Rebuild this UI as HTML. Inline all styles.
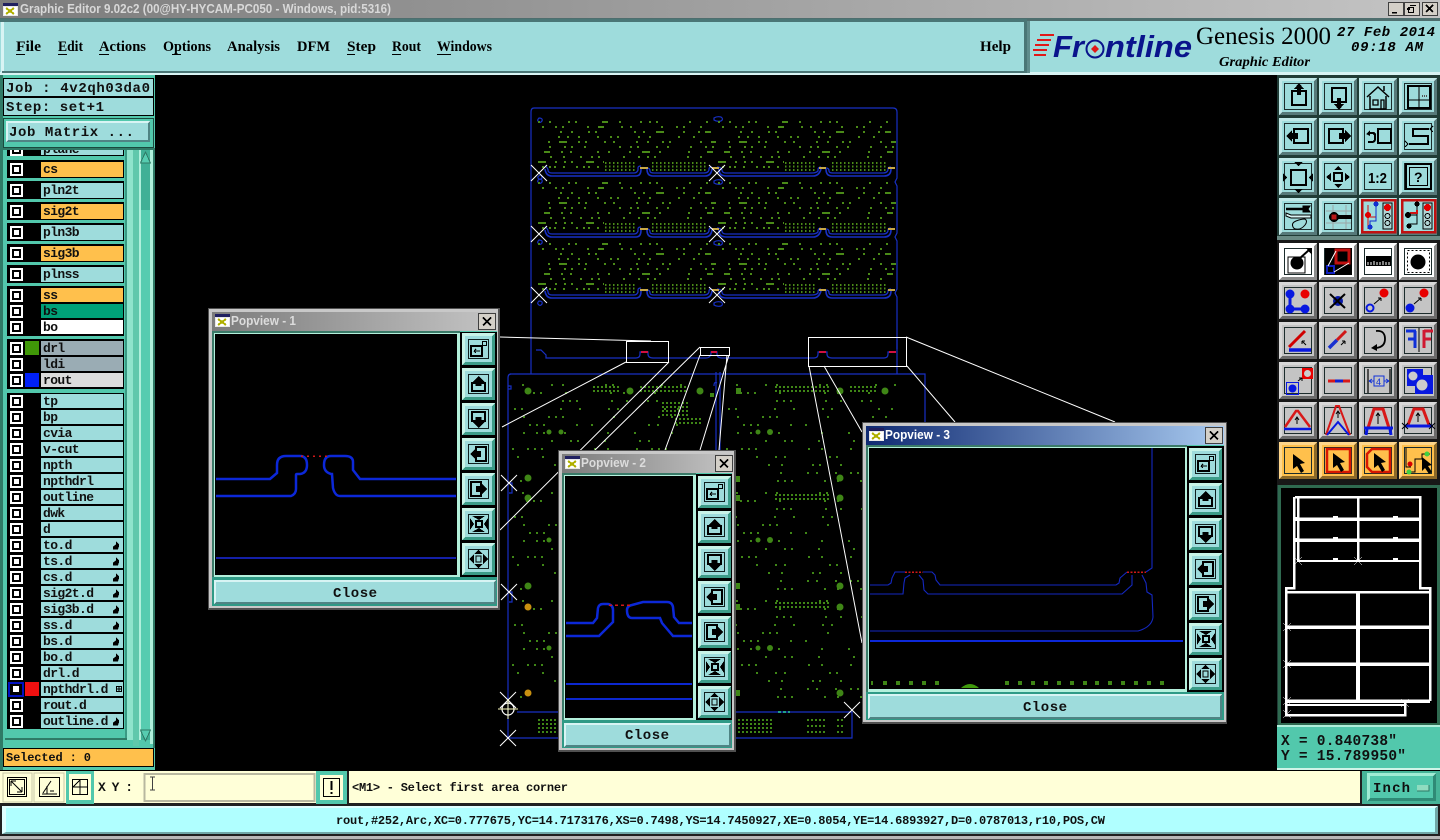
<!DOCTYPE html>
<html><head><meta charset="utf-8"><title>Graphic Editor</title>
<style>
html,body{margin:0;padding:0;background:#000;width:1440px;height:840px;overflow:hidden}
svg{display:block}
.m{font-family:"Liberation Mono",monospace;font-weight:bold;fill:#101010}
.s{font-family:"Liberation Serif",serif;font-weight:bold;fill:#000}
.l{font-size:13px;letter-spacing:-.6px}
.t{font-family:"Liberation Sans",sans-serif;font-weight:bold;font-size:13px}
</style></head><body>
<svg width="1440" height="840" viewBox="0 0 1440 840" xmlns="http://www.w3.org/2000/svg" shape-rendering="crispEdges">
<defs>
<linearGradient id="g1" x1="0" x2="1" y1="0" y2="0"><stop offset="0" stop-color="#7c7c7c"/><stop offset="1" stop-color="#c4c4c4"/></linearGradient>
<linearGradient id="g2" x1="0" x2="1" y1="0" y2="0"><stop offset="0" stop-color="#0f2a72"/><stop offset="1" stop-color="#a8caf0"/></linearGradient>
<g id="b"><rect width="38" height="37"/><path d="M0 0h38l-3 3H3v31l-3 3z" fill="#fff" fill-opacity=".35"/><path d="M38 37H0l3-3h32V3l3-3z" fill="#000" fill-opacity=".45"/><rect x="5.5" y="5.5" width="27" height="26" fill="none" stroke="#1c2c2c"/></g>
<g id="p"><rect width="33" height="32" fill="#9edcdc"/><path d="M0 0h33l-3 3H3v26l-3 3z" fill="#c8f4e8"/><path d="M33 32H0l3-3h27V3l3-3z" fill="#3c9c88"/><rect x="6.5" y="6.5" width="20" height="19" fill="none" stroke="#102020"/></g>
<g id="cb"><rect width="13" height="13" fill="#fff"/><rect x="2" y="2" width="9" height="9" fill="#000"/><rect x="4" y="4" width="5" height="5" fill="#fff"/></g>
<path id="hand" d="M-3 3.500l0-3 3-2 0-3 3 3 0 2-1 3z" fill="#000"/>
<g id="x" stroke="#fff" stroke-width="1" shape-rendering="auto"><path d="M-8-8L8 8M8-8L-8 8"/></g>
<g id="i1"><rect x="13" y="13" width="14" height="14" fill="none" stroke="#000" stroke-width="2"/><path d="M20 5l5 6h-3v6h-4v-6h-3z"/></g>
<g id="i2"><rect x="13" y="10" width="14" height="14" fill="none" stroke="#000" stroke-width="2"/><path d="M20 32l-5-6h3v-6h4v6h3z"/></g>
<g id="i3" fill="none" stroke="#000" shape-rendering="auto"><path d="M8 19L19 9l11 10M11 18v13h16V18M25 13V8" stroke-width="1.5"/><path d="M14 22h5v5h-5zM22 22h3v9h-3z" stroke-width="1.3"/></g>
<g id="i4" fill="none" stroke="#000"><rect x="9" y="8" width="22" height="22" stroke-width="2"/><path d="M20 8v22M9 22h22"/><path d="M23 18h6" stroke="#555" stroke-dasharray="1 1" stroke-width="2"/></g>
<g id="i5"><rect x="15" y="11" width="14" height="14" fill="none" stroke="#000" stroke-width="2"/><path d="M7 18l6-6v3h6v6h-6v3z"/></g>
<g id="i6"><rect x="10" y="11" width="14" height="14" fill="none" stroke="#000" stroke-width="2"/><path d="M32 18l-6-6v3h-6v6h6v3z"/></g>
<g id="i7"><rect x="19" y="11" width="13" height="14" fill="none" stroke="#000" stroke-width="2"/><path d="M7 16l4-4v2h3q3 0 3 3v4q0 4-4 4H9v-2h4q2 0 2-2v-3q0-2-2-2h-2v2z"/></g>
<g id="i8" fill="none" stroke="#000"><path d="M30 11H14v7h15v8H10" stroke-width="2"/><path d="M34 8l-3 3 3 3M6 23l3 3-3 3"/></g>
<g id="i9"><rect x="12" y="12" width="15" height="15" fill="none" stroke="#000" stroke-width="2"/><path d="M15 4h9l-4.500 4zM15 31h9l-4.500 4zM4 15v9l4-4.500zM34 15v9l-4-4.500z"/></g>
<g id="i10"><rect x="15" y="15" width="8" height="8" fill="none" stroke="#000" stroke-width="2"/><path d="M15 12h8l-4-4zM15 26h8l-4 4zM12 15v8l-5-4zM26 15v8l5-4z"/></g>
<g id="i12"><rect x="7" y="6" width="25" height="25" fill="none" stroke="#000" stroke-width="2"/><rect x="10.500" y="9.500" width="18" height="18" fill="none" stroke="#000"/><text x="15" y="24" font-family="Liberation Sans" font-weight="bold" font-size="14">?</text></g>
<g id="i13" fill="none" stroke="#000" shape-rendering="auto"><path d="M7 11h18" stroke-width="2.500"/><path d="M24 8h7l-2 3 2 3h-7z" fill="#000"/><path d="M7 15l5 2h20v3H12l-5-2z" fill="#d8f4f4" stroke-width="1"/><path d="M14 29q-2-4 3-6 5-2 9-2 3 2 0 6-4 5-9 4-2 0-3-2z" stroke-width="1"/></g>
<g id="i14"><path d="M7 13h25M7 25h25M14 7v24M27 7v24" stroke="#9ca6a6" fill="none"/><circle cx="15" cy="19" r="5" fill="#000"/><rect x="12.500" y="16.500" width="5" height="5" fill="#b81818"/><rect x="19" y="17" width="14" height="4"/></g>
<g id="i15"><rect x="3" y="2" width="33" height="32" fill="#9edcdc" stroke="#c01010" stroke-width="2.500"/><rect x="24" y="5" width="9" height="26" fill="#b0d4d4" stroke="#000"/><circle cx="28.500" cy="9.500" r="3.500" fill="#e00000"/><circle cx="28.500" cy="18" r="2.500" fill="none" stroke="#000"/><circle cx="28.500" cy="25" r="2.500" fill="none" stroke="#000"/><path d="M9 19h8M9 7v24" fill="none" stroke="#d01010"/><path d="M17 6v17H11v6" fill="none" stroke="#1030d0"/><circle cx="9" cy="17" r="3" fill="#e00000"/><circle cx="17" cy="6" r="2.500" fill="#1030d0"/><circle cx="11" cy="29" r="2.500" fill="#1030d0"/></g>
<g id="i16"><rect x="3" y="2" width="33" height="32" fill="#9edcdc" stroke="#c01010" stroke-width="2.500"/><rect x="24" y="5" width="9" height="26" fill="#b0d4d4" stroke="#000"/><circle cx="28.500" cy="9.500" r="3.500" fill="#e00000"/><circle cx="28.500" cy="18" r="2.500" fill="none" stroke="#000"/><circle cx="28.500" cy="25" r="2.500" fill="none" stroke="#000"/><path d="M18 6v20h-7M9 17h9" fill="none" stroke="#000"/><path d="M11 15h7v-3" fill="none" stroke="#d01010" stroke-width="2"/><circle cx="9" cy="17" r="3"/><circle cx="18" cy="6" r="2.500"/><circle cx="10" cy="28" r="2.500"/></g>
<g id="pa" fill="none" stroke="#000"><rect x="9" y="13" width="11" height="10" stroke-width="2"/><rect x="20.500" y="8.500" width="4" height="4"/><path d="M12 18h6M12 18l2-2M12 18l2 2"/></g>
<g id="pb"><rect x="10" y="15" width="13" height="8" fill="none" stroke="#000" stroke-width="2"/><path d="M16.500 8l6 6h-3v4h-6v-4h-3z"/></g>
<g id="pc"><rect x="10" y="9" width="13" height="9" fill="none" stroke="#000" stroke-width="2"/><path d="M16.500 25l-6-6h3v-5h6v5h3z"/></g>
<g id="pd"><rect x="14" y="9" width="10" height="14" fill="none" stroke="#000" stroke-width="2"/><path d="M8 16l6-6v3h5v6h-5v3z"/></g>
<g id="pe"><rect x="9" y="9" width="10" height="14" fill="none" stroke="#000" stroke-width="2"/><path d="M25 16l-6-6v3h-5v6h5v3z"/></g>
<g id="pf"><rect x="14" y="13" width="6" height="6" fill="none" stroke="#000" stroke-width="2"/><path d="M10 8h13l-6 4zM10 24h13l-6-4zM8 10v12l4-6zM26 10v12l-4-6z"/></g>
<g id="pg"><rect x="14" y="13" width="5" height="6" fill="none" stroke="#000"/><path d="M12 11h9l-4.500-4zM12 21h9l-4.500 4zM12 11v10l-5-5zM21 11v10l5-5z"/></g>
<g id="tb"><use href="#p"/><use href="#pa"/><use href="#p" y="35"/><use href="#pb" y="35"/><use href="#p" y="70"/><use href="#pc" y="70"/><use href="#p" y="105"/><use href="#pd" y="105"/><use href="#p" y="140"/><use href="#pe" y="140"/><use href="#p" y="175"/><use href="#pf" y="175"/><use href="#p" y="210"/><use href="#pg" y="210"/></g>
<g id="wi"><rect width="15" height="13" fill="#e8e8e8"/><rect width="15" height="3" fill="#202060"/><rect x="1" y="4" width="13" height="8" fill="#fff"/><path d="M3 5l8 6M11 5l-8 6" stroke="#b0b000" stroke-width="2"/></g>
<g id="wc"><rect width="17" height="16" fill="#d4d0c8" stroke="#404040"/><path d="M4.500 4l8 8M12.500 4l-8 8" stroke="#000" stroke-width="1.600"/></g>
<g id="cu" fill="none" stroke="#4a8a18" stroke-width="1.800">
<path d="M0 1h178" stroke-dasharray="2 9 2 17 2 5 2 25 6 11 2 19 2 7 2 5 2 31 2 15"/>
<path d="M0 6h178" stroke-dasharray="2 19 2 11 2 5 2 23 2 9 6 17 2 7 2 29 2 13 2 5 2 15" stroke-dashoffset="17"/>
<path d="M0 11h178" stroke-dasharray="2 13 2 5 6 25 2 9 2 15 2 5 2 37 2 7 2 11 8 19" stroke-dashoffset="31"/>
<path d="M0 16h178" stroke-dasharray="2 23 2 7 2 9 2 17 2 11 2 5 2 19 2 9 2 27 2 13" stroke-dashoffset="5"/>
<path d="M0 21h178" stroke-dasharray="2 13 2 5 2 29 2 9 8 11 2 5 2 17 2 7 2 21 2 9" stroke-dashoffset="43"/>
<path d="M0 26h178" stroke-dasharray="2 9 2 21 2 13 2 5 2 11 2 33 2 9 2 5 2 17" stroke-dashoffset="23"/>
<path d="M0 31h178" stroke-dasharray="2 17 6 11 2 7 2 25 2 9 2 19 2 11 8 9 2 27" stroke-dashoffset="13"/>
<path d="M0 36h178" stroke-dasharray="2 7 2 5 2 31 2 11 2 15 2 9 2 5 2 23 2 13" stroke-dashoffset="37"/>
<path d="M0 41h66" stroke-dasharray="8 9 2 7 2 5 2 13"/>
<path d="M0 46h66" stroke-dasharray="2 11 2 5 2 3 2 7" stroke-dashoffset="9"/>
<path d="M67 42h30M114 42h56M67 45.500h30M114 45.500h56M67 49h30M114 49h56" stroke-dasharray="1.600 2.400" stroke-width="1.600"/>
</g>
<g id="cl" fill="none" stroke="#3f8616" stroke-width="1.800">
<path d="M0 1h170" stroke-dasharray="2 15 2 27 2 9 2 41 2 5 2 47 2 17" stroke-dashoffset="7"/>
<path d="M0 9h170" stroke-dasharray="2 33 2 5 2 5 2 23 2 43 2 11 2 29" stroke-dashoffset="21"/>
<path d="M0 17h170" stroke-dasharray="2 19 2 7 2 53 2 5 2 5 2 33 2 13" stroke-dashoffset="35"/>
<path d="M0 25h170" stroke-dasharray="2 11 2 5 2 37 2 17 2 27 2 7 2 45" stroke-dashoffset="11"/>
<path d="M0 33h170" stroke-dasharray="2 43 2 11 2 23 2 5 2 5 2 49" stroke-dashoffset="47"/>
<path d="M0 41h170" stroke-dasharray="2 17 2 5 2 5 2 31 2 13 2 55 2 7" stroke-dashoffset="2"/>
<path d="M0 49h170" stroke-dasharray="2 25 2 35 2 11 2 5 2 19 2 41" stroke-dashoffset="53"/>
<path d="M0 57h170" stroke-dasharray="2 7 2 47 2 17 2 5 2 25 2 33" stroke-dashoffset="19"/>
<path d="M0 65h170" stroke-dasharray="2 27 2 13 2 5 2 5 2 51 2 11" stroke-dashoffset="29"/>
<path d="M0 73h170" stroke-dasharray="2 5 2 37 2 23 2 17 2 7 2 43" stroke-dashoffset="41"/>
<path d="M0 81h170" stroke-dasharray="2 49 2 11 2 29 2 5 2 19" stroke-dashoffset="9"/>
<path d="M0 89h170" stroke-dasharray="2 13 2 5 2 57 2 25 2 7 2 17" stroke-dashoffset="27"/>
<path d="M0 97h170" stroke-dasharray="2 21 2 41 2 5 2 5 2 31 2 11" stroke-dashoffset="15"/>
</g>
<g id="gr" stroke="#3f8616" stroke-width="1.800" stroke-dasharray="2 2" fill="none"><path d="M0 0h28M0 4h28"/></g>
<g id="row" fill="none" stroke="#1830c4" stroke-width="1.300" shape-rendering="auto">
<path d="M545 166q3 2 3 4 0 3 4 3H634q3 0 4-3v-2q0-2 3-2M647 168q3 0 3 3 0 2 4 2H704q4 0 5-3v-1q0-2 3-2M717 167q4 0 5 3 0 3 4 3H812q4 0 6-2v-1q0-3 3-3M826 168q3 0 3 3 0 2 4 2H883q4 0 5-3v-1q0-2 3-2"/>
<path d="M545 169q1 7 7 7H636q5 0 5-7M647 169q0 7 6 7H705q6 0 7-7M719 169q0 7 7 7H813q6 0 8-7M826 169q0 7 6 7H884q7 0 7-7" stroke-width="1.600"/>
<path d="M640 168h8M712 168h7M819 168h7M888 168h7" stroke="#c8a848" stroke-width="2"/>
</g>
</defs>

<rect width="1440" height="840" fill="#000"/>

<!-- Title bar -->
<rect width="1440" height="18" fill="url(#g1)"/>
<use href="#wi" x="3" y="3"/>
<text x="20" y="13" class="t" fill="#d8d8d8" textLength="371" lengthAdjust="spacingAndGlyphs">Graphic Editor 9.02c2 (00@HY-HYCAM-PC050 - Windows, pid:5316)</text>
<g fill="#d4d0c8" stroke="#404040"><rect x="1388.500" y="2.500" width="15" height="13"/><rect x="1404.500" y="2.500" width="15" height="13"/><rect x="1422.500" y="2.500" width="15" height="13"/></g>
<path d="M1392 12h5v1.500h-5zM1410 5h6v1h-6v4h-3v-2h3z" fill="#000"/>
<rect x="1408.500" y="7.500" width="5" height="5" fill="none" stroke="#000"/>
<path d="M1426 5l7 7M1433 5l-7 7" stroke="#000" stroke-width="1.500"/>
<rect y="18" width="1440" height="3" fill="#4e6e6e"/>

<!-- Menu -->
<rect y="21" width="1440" height="51" fill="#9edcdc"/>
<rect y="72" width="1440" height="3" fill="#d8f4f4"/>
<rect x="0" y="19" width="1027" height="3" fill="#4a7676"/>
<rect x="1" y="22" width="3" height="50" fill="#d8f4f4"/>
<rect x="2" y="71" width="1023" height="2" fill="#4a7676"/>
<rect x="1024" y="21" width="3" height="52" fill="#4a7676"/>
<rect x="1027" y="21" width="3" height="52" fill="#5f8c8c"/>
<text class="s" x="16" y="51" font-size="14.500" textLength="25" lengthAdjust="spacingAndGlyphs">File</text>
<text class="s" x="58" y="51" font-size="14.500" textLength="25" lengthAdjust="spacingAndGlyphs">Edit</text>
<text class="s" x="99" y="51" font-size="14.500" textLength="47" lengthAdjust="spacingAndGlyphs">Actions</text>
<text class="s" x="163" y="51" font-size="14.500" textLength="48" lengthAdjust="spacingAndGlyphs">Options</text>
<text class="s" x="227" y="51" font-size="14.500" textLength="53" lengthAdjust="spacingAndGlyphs">Analysis</text>
<text class="s" x="297" y="51" font-size="14.500" textLength="33" lengthAdjust="spacingAndGlyphs">DFM</text>
<text class="s" x="347" y="51" font-size="14.500" textLength="29" lengthAdjust="spacingAndGlyphs">Step</text>
<text class="s" x="392" y="51" font-size="14.500" textLength="29" lengthAdjust="spacingAndGlyphs">Rout</text>
<text class="s" x="437" y="51" font-size="14.500" textLength="55" lengthAdjust="spacingAndGlyphs">Windows</text>
<text class="s" x="980" y="51" font-size="14.500" textLength="31" lengthAdjust="spacingAndGlyphs">Help</text>
<path d="M16 54.500h9M58 54.500h9M99 54.500h10M172 54.500h9M347 54.500h8M392 54.500h9M437 54.500h14" stroke="#000" fill="none"/>

<!-- Header -->
<g stroke="#e01818" stroke-width="2" fill="none"><path d="M1040 35h14M1037 40h14M1035 45h14M1033 50h14M1034 55h12"/></g>
<text x="1053" y="57" font-family="Liberation Sans" font-weight="bold" font-style="italic" font-size="31" fill="#0a148c" textLength="31" lengthAdjust="spacingAndGlyphs">Fr</text>
<g shape-rendering="auto"><circle cx="1095" cy="49" r="8.500" fill="none" stroke="#0a148c" stroke-width="2"/><path d="M1095 45l4 4-4 4-4-4z" fill="#e01818"/></g>
<text x="1105" y="57" font-family="Liberation Sans" font-weight="bold" font-style="italic" font-size="31" fill="#0a148c" textLength="87" lengthAdjust="spacingAndGlyphs">ntline</text>
<text x="1196" y="44" font-family="Liberation Serif" font-size="25" fill="#000" textLength="135" lengthAdjust="spacingAndGlyphs">Genesis 2000</text>
<text x="1337" y="36" font-family="Liberation Mono" font-weight="bold" font-style="italic" font-size="14" fill="#000" textLength="98" xml:space="preserve">27 Feb 2014</text>
<text x="1351" y="51" font-family="Liberation Mono" font-weight="bold" font-style="italic" font-size="14" fill="#000" textLength="72">09:18 AM</text>
<text x="1219" y="66" font-family="Liberation Serif" font-weight="bold" font-style="italic" font-size="14" fill="#000" textLength="91" lengthAdjust="spacingAndGlyphs">Graphic Editor</text>

<!-- Left panel -->
<rect x="0" y="75" width="155" height="696" fill="#52c8ac"/>
<rect x="0" y="75" width="3" height="696" fill="#2f7a66"/>

<!-- scroll -->
<rect x="127" y="150" width="6" height="590" fill="#8fe4cc"/>
<rect x="133" y="150" width="6" height="596" fill="#60c8ac"/>
<rect x="139" y="150" width="2" height="590" fill="#b0f0dc"/>
<rect x="141" y="150" width="9" height="590" fill="#40b096"/>
<rect x="141" y="210" width="9" height="520" fill="#56ccb0"/>
<rect x="150" y="150" width="3" height="594" fill="#b0f0dc"/>
<rect x="153" y="150" width="2" height="598" fill="#2f7a66"/>
<path d="M145.500 152l5 11h-10z" fill="#56ccb0" stroke="#2f7a66"/>
<path d="M145.500 741l5-11h-10z" fill="#56ccb0" stroke="#2f7a66"/>
<rect x="125" y="150" width="2" height="590" fill="#3a9a84"/>

<!-- Layer list -->
<rect x="5" y="150" width="120" height="588" fill="#52c8ac"/>
<rect x="7" y="140" width="117" height="16" fill="#000"/>
<rect x="41" y="140" width="82" height="15" fill="#9edcdc"/><use href="#cb" x="10" y="143"/>
<text x="43" y="153" class="m l">plane</text>
<rect x="7" y="157" width="117" height="2" fill="#52c8ac"/>
<g>
<rect x="7" y="160" width="117" height="18" fill="#000"/><rect x="7" y="181" width="117" height="18" fill="#000"/><rect x="7" y="202" width="117" height="18" fill="#000"/><rect x="7" y="223" width="117" height="18" fill="#000"/><rect x="7" y="244" width="117" height="18" fill="#000"/><rect x="7" y="265" width="117" height="18" fill="#000"/>
<rect x="7" y="286" width="117" height="50" fill="#000"/><rect x="7" y="339" width="117" height="50" fill="#000"/><rect x="7" y="393" width="117" height="336" fill="#000"/>
</g>
<g>
<use href="#cb" x="10" y="163"/><rect x="41" y="162" width="82" height="15" fill="#ffc04c"/><text x="43" y="173" class="m l">cs</text>
<use href="#cb" x="10" y="184"/><rect x="41" y="183" width="82" height="15" fill="#9edcdc"/><text x="43" y="194" class="m l">pln2t</text>
<use href="#cb" x="10" y="205"/><rect x="41" y="204" width="82" height="15" fill="#ffc04c"/><text x="43" y="215" class="m l">sig2t</text>
<use href="#cb" x="10" y="226"/><rect x="41" y="225" width="82" height="15" fill="#9edcdc"/><text x="43" y="236" class="m l">pln3b</text>
<use href="#cb" x="10" y="247"/><rect x="41" y="246" width="82" height="15" fill="#ffc04c"/><text x="43" y="257" class="m l">sig3b</text>
<use href="#cb" x="10" y="268"/><rect x="41" y="267" width="82" height="15" fill="#9edcdc"/><text x="43" y="278" class="m l">plnss</text>
<use href="#cb" x="10" y="289"/><rect x="41" y="288" width="82" height="14" fill="#ffc04c"/><text x="43" y="299" class="m l">ss</text>
<use href="#cb" x="10" y="305"/><rect x="41" y="304" width="82" height="14" fill="#00a078"/><text x="43" y="315" class="m l">bs</text>
<use href="#cb" x="10" y="321"/><rect x="41" y="320" width="82" height="14" fill="#fff"/><text x="43" y="331" class="m l">bo</text>
<use href="#cb" x="10" y="342"/><rect x="25" y="341" width="14" height="14" fill="#409808"/><rect x="41" y="341" width="82" height="14" fill="#9aacb4"/><text x="43" y="352" class="m l">drl</text>
<use href="#cb" x="10" y="358"/><rect x="41" y="357" width="82" height="14" fill="#9aacb4"/><text x="43" y="368" class="m l">ldi</text>
<use href="#cb" x="10" y="374"/><rect x="25" y="373" width="14" height="14" fill="#0020f8"/><rect x="41" y="373" width="82" height="14" fill="#dcdcdc"/><text x="43" y="384" class="m l">rout</text>
<use href="#cb" x="10" y="395"/><rect x="41" y="394" width="82" height="14" fill="#9edcdc"/><text x="43" y="405" class="m l">tp</text>
<use href="#cb" x="10" y="411"/><rect x="41" y="410" width="82" height="14" fill="#9edcdc"/><text x="43" y="421" class="m l">bp</text>
<use href="#cb" x="10" y="427"/><rect x="41" y="426" width="82" height="14" fill="#9edcdc"/><text x="43" y="437" class="m l">cvia</text>
<use href="#cb" x="10" y="443"/><rect x="41" y="442" width="82" height="14" fill="#9edcdc"/><text x="43" y="453" class="m l">v-cut</text>
<use href="#cb" x="10" y="459"/><rect x="41" y="458" width="82" height="14" fill="#9edcdc"/><text x="43" y="469" class="m l">npth</text>
<use href="#cb" x="10" y="475"/><rect x="41" y="474" width="82" height="14" fill="#9edcdc"/><text x="43" y="485" class="m l">npthdrl</text>
<use href="#cb" x="10" y="491"/><rect x="41" y="490" width="82" height="14" fill="#9edcdc"/><text x="43" y="501" class="m l">outline</text>
<use href="#cb" x="10" y="507"/><rect x="41" y="506" width="82" height="14" fill="#9edcdc"/><text x="43" y="517" class="m l">dwk</text>
<use href="#cb" x="10" y="523"/><rect x="41" y="522" width="82" height="14" fill="#9edcdc"/><text x="43" y="533" class="m l">d</text>
<use href="#cb" x="10" y="539"/><rect x="41" y="538" width="82" height="14" fill="#9edcdc"/><text x="43" y="549" class="m l">to.d</text><use href="#hand" x="116" y="546"/>
<use href="#cb" x="10" y="555"/><rect x="41" y="554" width="82" height="14" fill="#9edcdc"/><text x="43" y="565" class="m l">ts.d</text><use href="#hand" x="116" y="562"/>
<use href="#cb" x="10" y="571"/><rect x="41" y="570" width="82" height="14" fill="#9edcdc"/><text x="43" y="581" class="m l">cs.d</text><use href="#hand" x="116" y="578"/>
<use href="#cb" x="10" y="587"/><rect x="41" y="586" width="82" height="14" fill="#9edcdc"/><text x="43" y="597" class="m l">sig2t.d</text><use href="#hand" x="116" y="594"/>
<use href="#cb" x="10" y="603"/><rect x="41" y="602" width="82" height="14" fill="#9edcdc"/><text x="43" y="613" class="m l">sig3b.d</text><use href="#hand" x="116" y="610"/>
<use href="#cb" x="10" y="619"/><rect x="41" y="618" width="82" height="14" fill="#9edcdc"/><text x="43" y="629" class="m l">ss.d</text><use href="#hand" x="116" y="626"/>
<use href="#cb" x="10" y="635"/><rect x="41" y="634" width="82" height="14" fill="#9edcdc"/><text x="43" y="645" class="m l">bs.d</text><use href="#hand" x="116" y="642"/>
<use href="#cb" x="10" y="651"/><rect x="41" y="650" width="82" height="14" fill="#9edcdc"/><text x="43" y="661" class="m l">bo.d</text><use href="#hand" x="116" y="658"/>
<use href="#cb" x="10" y="667"/><rect x="41" y="666" width="82" height="14" fill="#9edcdc"/><text x="43" y="677" class="m l">drl.d</text>
<rect x="8" y="682" width="16" height="15" fill="#0010c0"/><rect x="10" y="684" width="12" height="11" fill="#000"/><rect x="13" y="686" width="6" height="6" fill="#fff"/><rect x="25" y="682" width="14" height="14" fill="#f01010"/><rect x="41" y="682" width="82" height="14" fill="#9edcdc"/><text x="43" y="693" class="m l">npthdrl.d</text><path d="M116.500 686.500h5v5h-5zM119 686v6M116 689h6" fill="none" stroke="#000"/>
<use href="#cb" x="10" y="699"/><rect x="41" y="698" width="82" height="14" fill="#9edcdc"/><text x="43" y="709" class="m l">rout.d</text>
<use href="#cb" x="10" y="715"/><rect x="41" y="714" width="82" height="14" fill="#9edcdc"/><text x="43" y="725" class="m l">outline.d</text><use href="#hand" x="116" y="722"/>
</g>
<rect x="5" y="738" width="122" height="2" fill="#2f7a66"/>
<rect x="3" y="748" width="151" height="19" fill="#000"/><rect x="4" y="749" width="149" height="17" fill="#ffc04c"/>
<text x="6" y="761" class="m" font-size="12" textLength="85" xml:space="preserve">Selected : 0</text>

<!-- Job panel (covers top of list) -->
<rect x="0" y="75" width="155" height="75" fill="#52c8ac"/>
<rect x="0" y="75" width="3" height="75" fill="#2f7a66"/>
<rect x="3" y="78" width="151" height="19" fill="#000"/><rect x="4" y="79" width="149" height="17" fill="#9edcdc"/>
<rect x="3" y="97" width="151" height="19" fill="#000"/><rect x="4" y="98" width="149" height="17" fill="#9edcdc"/>
<text x="6" y="92" class="m" font-size="14" textLength="144" xml:space="preserve">Job : 4v2qh03da0</text>
<text x="6" y="111" class="m" font-size="14" textLength="98">Step: set+1</text>
<rect x="3.500" y="118.500" width="150" height="29" fill="none" stroke="#1a4a3e"/>
<rect x="6" y="121" width="144" height="21" fill="#9edcdc"/>
<path d="M6 121h144l-2 2H8v17l-2 2z" fill="#d8f4f4"/><path d="M150 142H6l2-2h140v-17l2-2z" fill="#4f8484"/>
<text x="9" y="136" class="m" font-size="14" textLength="125" xml:space="preserve">Job Matrix ...</text>
<rect x="0" y="148" width="155" height="2" fill="#2f7a66"/>

<!-- PCB top -->
<g fill="none" stroke="#1830c4" stroke-width="1.200" shape-rendering="auto">
<path d="M534 108H893q4 0 4 4v66l-2 4 2 4v47l-2 4 2 4v48l-2 4 2 4v52M531 340V112q0-4 3-4"/>
<path d="M531 340v34M897 340v34M510 374H925v48"/>
<path d="M539 118q-2 2-1 3 2 3 4 0 1-3-3-3zM714 118q3-2 7-1 3 2 0 4-4 1-7-1z"/>
<path d="M540 175q-3 2-2 3 2 3 4 0 0-3-2-3z"/>
<path d="M714 181q3-2 7-1 3 2 0 4-4 1-7-1zM714 242q3-2 7-1 3 2 0 4-4 1-7-1zM714 303q3-2 7-1 3 2 0 4-4 1-7-1z"/>
<path d="M539 179q-2 2-1 3 2 3 4 0 1-3-3-3zM539 240q-2 2-1 3 2 3 4 0 1-3-3-3zM539 301q-2 2-1 3 2 3 4 0 1-3-3-3z"/>
<path d="M536 350h5l5 5v3H636q4 0 4-4v-2h8v2q0 4 5 4H706q4 0 5-4v-2h6v2q0 4 5 4H814q4 0 4-4v-2h9v2q0 4 5 4H884q4 0 4-4v-2h7"/>
</g>
<use href="#cu" x="538" y="121"/><use href="#cu" x="718" y="121"/>
<use href="#cu" x="538" y="182"/><use href="#cu" x="718" y="182"/>
<use href="#cu" x="538" y="243"/><use href="#cu" x="718" y="243"/>
<use href="#row"/><use href="#row" y="61"/><use href="#row" y="122"/>
<path d="M641 352h7M711 352h6M819 352h7M889 352h7" stroke="#d01040" stroke-width="2"/>

<!-- PCB lower -->
<g fill="none" stroke="#1830c4" stroke-width="1.200" shape-rendering="auto">
<path d="M508 378q0-4 3-4M508 378v360h344V712H517M508 386l3 0v3l-3 0M716 372v78M720 372v78M717 383q-3-2-3 3M509 483h3v10h-3M509 592h3v10h-3"/>
</g>
<use href="#cl" x="512" y="384"/><use href="#cl" x="512" y="492"/><use href="#cl" x="512" y="600"/>
<use href="#cl" x="726" y="384"/><use href="#cl" x="726" y="492"/><use href="#cl" x="726" y="600"/>
<use href="#gr" x="593" y="387"/><use href="#gr" x="640" y="387"/><use href="#gr" x="660" y="387"/><use href="#gr" x="775" y="387"/><use href="#gr" x="803" y="387"/><use href="#gr" x="850" y="387"/>
<use href="#gr" x="803" y="495"/><use href="#gr" x="775" y="495"/><use href="#gr" x="803" y="603"/><use href="#gr" x="775" y="603"/>
<use href="#gr" x="662" y="403"/><use href="#gr" x="662" y="411"/><use href="#gr" x="675" y="419"/>
<g fill="#3f8616" shape-rendering="auto">
<circle cx="528" cy="391" r="3.500"/><circle cx="630" cy="391" r="3.500"/><circle cx="700" cy="391" r="3.500"/><circle cx="840" cy="391" r="3.500"/><circle cx="885" cy="391" r="3.500"/>
<circle cx="528" cy="478" r="3.500"/><circle cx="528" cy="498" r="3.500"/><circle cx="528" cy="586" r="3.500"/>
<circle cx="840" cy="478" r="3.500"/><circle cx="840" cy="498" r="3.500"/><circle cx="840" cy="586" r="3.500"/><circle cx="840" cy="607" r="3.500"/><circle cx="840" cy="693" r="3.500"/>
<rect x="736" y="388" width="5" height="6"/><rect x="736" y="476" width="4" height="6"/><rect x="736" y="495" width="4" height="6"/><rect x="736" y="583" width="4" height="6"/><rect x="736" y="604" width="4" height="6"/><rect x="736" y="690" width="4" height="6"/>
<circle cx="549" cy="432" r="2.500"/><circle cx="561" cy="432" r="2.500"/><circle cx="549" cy="540" r="2.500"/><circle cx="549" cy="648" r="2.500"/>
<circle cx="758" cy="432" r="2.500"/><circle cx="770" cy="432" r="3"/><circle cx="758" cy="540" r="2.500"/><circle cx="770" cy="540" r="3"/><circle cx="758" cy="648" r="2.500"/><circle cx="770" cy="648" r="3"/>
<rect x="710" y="393" width="4" height="4"/>
</g>
<circle cx="528" cy="607" r="3.500" fill="#c89010" shape-rendering="auto"/><circle cx="528" cy="693" r="3.500" fill="#c89010" shape-rendering="auto"/>
<path d="M538 720h20M538 724h20M538 728h20M538 732h20M738 720h34M738 724h34M738 728h34M738 732h34M807 720h20M807 726h20M807 732h20M837 720h8M837 726h8M837 732h8" stroke="#3f8616" stroke-width="2" stroke-dasharray="2 2"/>
<path d="M778 712h12" stroke="#20a088" stroke-width="2" stroke-dasharray="3 2"/>

<!-- White callouts -->
<g fill="none" stroke="#fff" stroke-width="1" shape-rendering="auto">
<path d="M500 337l151 4M626.500 341.500h42v21h-42zM626 362L502 427M669 362L500 530"/>
<path d="M700.500 347.500h29v8h-29zM700 347L595 450M700 355L665 450M729 355L700 450M727 355L719 450"/>
<path d="M808.500 337.500h98v29h-98zM906 337L1115 422M907 366L955 422M824 366L862 432M809 366L862 643"/>
</g>
<g shape-rendering="auto"><use href="#x" x="539" y="173"/><use href="#x" x="717" y="173"/><use href="#x" x="539" y="234"/><use href="#x" x="717" y="234"/><use href="#x" x="539" y="295"/><use href="#x" x="717" y="295"/>
<use href="#x" x="509" y="483"/><use href="#x" x="509" y="592"/><use href="#x" x="508" y="700"/><use href="#x" x="508" y="738"/><use href="#x" x="852" y="710"/>
<circle cx="508" cy="709" r="6" fill="none" stroke="#fff" stroke-width="1.200"/><path d="M498 709h20M508 699v20" stroke="#ffffc0"/></g>

<!-- Popview 1 -->
<rect x="208" y="308" width="292" height="302" fill="#505050"/><rect x="209" y="309" width="289" height="299" fill="#c8c8c8"/>
<rect x="212" y="312" width="284" height="19" fill="url(#g1)"/><use href="#wi" x="215" y="314"/>
<text x="231" y="325" class="t" fill="#dcdcdc" textLength="65" lengthAdjust="spacingAndGlyphs">Popview - 1</text><use href="#wc" x="478.500" y="313.500"/>
<rect x="212" y="331" width="285" height="275" fill="#52c8ac"/>
<rect x="212" y="331" width="248" height="246" fill="#3a7a68"/><rect x="214" y="333" width="246" height="244" fill="#b4f0dc"/><rect x="215" y="334" width="242" height="241" fill="#000"/>
<rect x="460" y="332" width="37" height="245" fill="#000"/><use href="#tb" x="462" y="333"/>
<rect x="212" y="577" width="285" height="29" fill="#2f9a86"/><rect x="214" y="580" width="282" height="24" fill="#9edcdc"/><path d="M214 580h282l-2 2H216v20l-2 2z" fill="#d8f4f4"/><path d="M496 604H214l2-2h278v-20l2-2z" fill="#4f8484"/>
<text x="333" y="597" class="m" font-size="14" textLength="44">Close</text>
<g fill="none" stroke="#0c28d8" stroke-width="2.500" shape-rendering="auto">
<path d="M216 479h54l7-6v-8q0-9 9-9h14q7 0 7 9 0 8-7 9h-3q-1 0-1 1v14q0 5-5 7H216"/>
<path d="M456 479H360l-7-9v-8q0-6-8-6H331q-7 0-7 9 0 7 7 9h1l1 14q2 8 7 8H456"/>
</g>
<path d="M216 558h240" stroke="#1420a8" stroke-width="2"/>
<path d="M301 456h29" stroke="#d01818" stroke-width="1.500" stroke-dasharray="2 4"/>

<!-- Popview 2 -->
<rect x="558" y="450" width="178" height="302" fill="#505050"/><rect x="559" y="451" width="175" height="299" fill="#c8c8c8"/>
<rect x="562" y="454" width="170" height="19" fill="url(#g1)"/><use href="#wi" x="565" y="456"/>
<text x="581" y="467" class="t" fill="#dcdcdc" textLength="65" lengthAdjust="spacingAndGlyphs">Popview - 2</text><use href="#wc" x="715.500" y="455.500"/>
<rect x="562" y="473" width="170" height="275" fill="#52c8ac"/>
<rect x="562" y="473" width="134" height="247" fill="#3a7a68"/><rect x="564" y="475" width="132" height="245" fill="#b4f0dc"/><rect x="565" y="476" width="128" height="242" fill="#000"/>
<rect x="696" y="474" width="36" height="246" fill="#000"/><use href="#tb" x="698" y="476"/>
<rect x="562" y="720" width="170" height="28" fill="#2f9a86"/><rect x="564" y="723" width="167" height="24" fill="#9edcdc"/><path d="M564 723h167l-2 2H566v20l-2 2z" fill="#d8f4f4"/><path d="M731 747H564l2-2h163v-20l2-2z" fill="#4f8484"/>
<text x="625" y="739" class="m" font-size="14" textLength="44">Close</text>
<g fill="none" stroke="#0c28d8" stroke-width="2.500" shape-rendering="auto">
<path d="M566 623h27l4-5 1-10q1-4 5-4h5q5 1 5 6v12l-14 14H566"/>
<path d="M692 623H679l-5-6-1-10q-1-5-6-5H643l-11 3q-5 1-5 5 0 8 5 8l28 0q2 5 2 5l11 13H692"/>
</g>
<path d="M566 684h126M566 699h126" stroke="#0c28d0" stroke-width="2"/>
<path d="M609 605h23" stroke="#d01818" stroke-width="1.500" stroke-dasharray="3 3"/>

<!-- Popview 3 -->
<rect x="862" y="422" width="365" height="302" fill="#505050"/><rect x="863" y="423" width="363" height="299" fill="#c8c8c8"/>
<rect x="866" y="426" width="358" height="19" fill="url(#g2)"/><use href="#wi" x="869" y="428"/>
<text x="885" y="439" class="t" fill="#fff" textLength="65" lengthAdjust="spacingAndGlyphs">Popview - 3</text><use href="#wc" x="1205.500" y="427.500"/>
<rect x="866" y="445" width="358" height="275" fill="#52c8ac"/>
<rect x="866" y="445" width="321" height="247" fill="#3a7a68"/><rect x="868" y="447" width="319" height="245" fill="#b4f0dc"/><rect x="869" y="448" width="316" height="241" fill="#000"/>
<rect x="1187" y="446" width="37" height="246" fill="#000"/><use href="#tb" x="1189" y="448"/>
<rect x="866" y="692" width="358" height="28" fill="#2f9a86"/><rect x="868" y="694" width="354" height="25" fill="#9edcdc"/><path d="M868 694h354l-2 2H870v21l-2 2z" fill="#d8f4f4"/><path d="M1222 719H868l2-2h350v-21l2-2z" fill="#4f8484"/>
<text x="1023" y="711" class="m" font-size="14" textLength="44">Close</text>
<g fill="none" stroke="#1428c0" stroke-width="1.100" shape-rendering="auto">
<path d="M1152 448V568l-6 4M1127 572l-7 6-1 5-3 2H940l-4-5-1-5-3-3H923M905 572H895l-3 6-1 5-3 2H870"/>
<path d="M870 594h33l1-11 1-5 5-3M919 575l4 5 1 10 4 4h194l10-9v-10M1142 575l4 8 1 9 5 3 1 22q-1 10-15 14H870"/>
</g>
<path d="M870 641h313" stroke="#0c28d8" stroke-width="2"/>
<path d="M905 572h18M1127 572h19" stroke="#d01818" stroke-width="1.500" stroke-dasharray="2 1.500"/>
<path d="M871 683h2M883 683h4M896 683h4M909 683h4M922 683h4M935 683h4M1005 683h4M1018 683h4M1031 683h4M1044 683h4M1057 683h4M1070 683h4M1083 683h4M1095 683h4M1108 683h4M1121 683h4M1134 683h4M1147 683h4M1160 683h4" stroke="#3f8616" stroke-width="4"/>
<path d="M961 688q9-8 18 0z" fill="#3f9a0c" shape-rendering="auto"/>

<!-- Right toolbar -->
<rect x="1277" y="75" width="163" height="696" fill="#203c36"/>
<rect x="1277" y="236" width="163" height="4" fill="#6a8a84"/>
<rect x="1277" y="240" width="163" height="245" fill="#181818"/>
<g fill="#9edcdc">
<use href="#b" x="1279" y="78"/><use href="#b" x="1319" y="78"/><use href="#b" x="1359" y="78"/><use href="#b" x="1399" y="78"/>
<use href="#b" x="1279" y="118"/><use href="#b" x="1319" y="118"/><use href="#b" x="1359" y="118"/><use href="#b" x="1399" y="118"/>
<use href="#b" x="1279" y="158"/><use href="#b" x="1319" y="158"/><use href="#b" x="1359" y="158"/><use href="#b" x="1399" y="158"/>
<use href="#b" x="1279" y="198"/><use href="#b" x="1319" y="198"/><use href="#b" x="1359" y="198"/><use href="#b" x="1399" y="198"/>
</g>
<use href="#i1" x="1279" y="78"/><use href="#i2" x="1319" y="78"/><use href="#i3" x="1359" y="78"/><use href="#i4" x="1399" y="78"/>
<use href="#i5" x="1279" y="118"/><use href="#i6" x="1319" y="118"/><use href="#i7" x="1359" y="118"/><use href="#i8" x="1399" y="118"/>
<use href="#i9" x="1279" y="158"/><use href="#i10" x="1319" y="158"/><text x="1368" y="183" font-family="Liberation Sans" font-weight="bold" font-size="15" fill="#000" textLength="19" lengthAdjust="spacingAndGlyphs">1:2</text><use href="#i12" x="1399" y="158"/>
<use href="#i13" x="1279" y="198"/><use href="#i14" x="1319" y="198"/><use href="#i15" x="1359" y="198"/><use href="#i16" x="1399" y="198"/>

<use href="#b" x="1279" y="243" fill="#fff"/><use href="#b" x="1319" y="243" fill="#fff"/><use href="#b" x="1359" y="243" fill="#fff"/><use href="#b" x="1399" y="243" fill="#fff"/>
<g transform="translate(1279 243)"><rect x="9" y="14" width="17" height="16" fill="none" stroke="#000"/><circle cx="18" cy="20" r="6.500" shape-rendering="auto"/><path d="M20 16L30 7" stroke="#000" stroke-width="2" shape-rendering="auto"/><path d="M27 5h6v7z"/></g>
<g transform="translate(1319 243)"><rect x="6" y="5" width="27" height="27"/><rect x="17" y="7" width="13" height="13" fill="none" stroke="#c01010" stroke-width="3"/><rect x="8" y="23" width="7" height="7" fill="none" stroke="#1020c0" stroke-width="2"/><path d="M9 23L17 8M15 29L30 20" stroke="#fff" shape-rendering="auto"/></g>
<g transform="translate(1359 243)"><rect x="7" y="13" width="25" height="10"/><path d="M9 22v-3M12 22v-3M15 22v-4M18 22v-3M21 22v-3M24 22v-4M27 22v-3M30 22v-3" stroke="#fff"/></g>
<g transform="translate(1399 243)"><rect x="8.500" y="7.500" width="22" height="22" fill="none" stroke="#000" stroke-dasharray="2 2"/><circle cx="19" cy="19" r="7.500" shape-rendering="auto"/></g>

<g fill="#c4c4c4">
<use href="#b" x="1279" y="282"/><use href="#b" x="1319" y="282"/><use href="#b" x="1359" y="282"/><use href="#b" x="1399" y="282"/>
<use href="#b" x="1279" y="322"/><use href="#b" x="1319" y="322"/><use href="#b" x="1359" y="322"/><use href="#b" x="1399" y="322"/>
<use href="#b" x="1279" y="362"/><use href="#b" x="1319" y="362"/><use href="#b" x="1359" y="362"/><use href="#b" x="1399" y="362"/>
<use href="#b" x="1279" y="402"/><use href="#b" x="1319" y="402"/><use href="#b" x="1359" y="402"/><use href="#b" x="1399" y="402"/>
</g>
<g shape-rendering="auto">
<g transform="translate(1279 282)"><path d="M11 13v14h14" fill="none" stroke="#0818e0" stroke-width="3"/><circle cx="11" cy="12" r="4.500" fill="#0818e0"/><circle cx="11" cy="27" r="4.500" fill="#0818e0"/><circle cx="26" cy="27" r="4.500" fill="#0818e0"/><circle cx="26" cy="12" r="4.500" fill="#e80000"/></g>
<g transform="translate(1319 282)"><circle cx="19" cy="19" r="5" fill="#0818a8"/><path d="M11 12l15 14M26 12L11 26" stroke="#000" stroke-width="2"/></g>
<g transform="translate(1359 282)"><circle cx="25" cy="11" r="4.500" fill="#e80000"/><circle cx="11" cy="26" r="3.500" fill="none" stroke="#0818e0" stroke-width="2"/><path d="M15 22l7-6M22 16l-3 0M22 16v3" stroke="#000"/></g>
<g transform="translate(1399 282)"><circle cx="25" cy="11" r="4.500" fill="#e80000"/><circle cx="11" cy="26" r="4.500" fill="#0818e0"/><path d="M15 22l7-6M22 16l-3 0M22 16v3" stroke="#000"/></g>

<g transform="translate(1279 322)"><path d="M10 25L26 9" stroke="#d00000" stroke-width="3"/><path d="M10 28h22" stroke="#0818e0" stroke-width="3.500"/><path d="M23 19l4 4M23 19v3M23 19h3" stroke="#000"/></g>
<g transform="translate(1319 322)"><path d="M10 26l8-8" stroke="#1830d0" stroke-width="3.500"/><path d="M18 18l9-9" stroke="#d01818" stroke-width="3"/><path d="M22 23l4-4M26 19h-3M26 19v3" stroke="#000"/></g>
<g transform="translate(1359 322)"><path d="M17 9q9-1 9 8 0 8-9 9" fill="none" stroke="#000" stroke-width="1.800"/><path d="M12 26l6-4v7z"/></g>
<g transform="translate(1399 322)"><path d="M7 9h10M9 17h8M16 9v17" fill="none" stroke="#1030d8" stroke-width="3"/><path d="M20 6v24" stroke="#000"/><path d="M34 9H25M32 17h-7M25 8v18" fill="none" stroke="#d01830" stroke-width="3"/></g>

<g transform="translate(1279 362)"><rect x="23" y="6" width="11" height="11" fill="#e80000"/><circle cx="28.500" cy="11.500" r="3.500" fill="#ccc"/><rect x="7.500" y="20.500" width="12" height="12" fill="none" stroke="#0818e0"/><circle cx="13.500" cy="26.500" r="4" fill="#0818e0"/><path d="M19 19l4-3M23 16h-3M23 16v3" stroke="#000"/></g>
<g transform="translate(1319 362)"><path d="M9 19h22" stroke="#d81818" stroke-width="3"/><path d="M16 19h8" stroke="#1020d0" stroke-width="3"/></g>
<g transform="translate(1359 362)"><path d="M9 7v24M31 7v24" stroke="#000" stroke-width="1.200"/><path d="M10 19h20M10 19l3-2M10 19l3 2M30 19l-3-2M30 19l-3 2" stroke="#1030d8" fill="none"/><rect x="15" y="14" width="10" height="10" fill="#c4c4c4" stroke="#1030d8"/><text x="17" y="23" font-family="Liberation Sans" font-size="9" fill="#1030d8" textLength="6">4</text></g>
<g transform="translate(1399 362)"><path d="M8 7h16v6h10v19H16v-8H8z" fill="#0818e0"/><circle cx="14" cy="14" r="4.500" fill="#ccc"/><circle cx="23" cy="23" r="5.500" fill="#ccc"/></g>

<g transform="translate(1279 402)"><path d="M6 25L17 9h2l12 16" fill="none" stroke="#d81818" stroke-width="2.500"/><path d="M5 27h27" stroke="#0818e0" stroke-width="2.500"/><path d="M18 22v-6M16 18l2-3 2 3" stroke="#000" fill="none"/></g>
<g transform="translate(1319 402)"><path d="M7 33L17 4h3l11 29" fill="none" stroke="#d81818" stroke-width="2"/><path d="M8 33l11-13 11 13" fill="none" stroke="#0818e0" stroke-width="2"/><path d="M19 16V10M17 12l2-3 2 3" stroke="#000" fill="none"/></g>
<g transform="translate(1359 402)"><path d="M9 26L15 7h9l6 19" fill="none" stroke="#d81818" stroke-width="3"/><path d="M8 27l-1 6M31 27l1 6" stroke="#0818e0" stroke-width="3"/><path d="M5 26h29" stroke="#0818e0" stroke-width="3"/><path d="M19 22V12M17 14l2-3 2 3" stroke="#000" fill="none"/></g>
<g transform="translate(1399 402)"><path d="M9 23L15 7h9l6 16" fill="none" stroke="#d81818" stroke-width="3"/><path d="M5 24h29" stroke="#0818e0" stroke-width="3"/><path d="M3 21l6 6M9 21l-6 6M30 21l6 6M36 21l-6 6" stroke="#000"/><path d="M19 20V12M17 14l2-3 2 3" stroke="#000" fill="none"/></g>
</g>
<g fill="#ffc04c"><use href="#b" x="1279" y="442"/><use href="#b" x="1319" y="442"/><use href="#b" x="1359" y="442"/><use href="#b" x="1399" y="442"/></g>
<g shape-rendering="auto">
<path d="M14 12l0 15 4-3 4 7 3-2-4-7 5-1z" transform="translate(1279 442)"/>
<g transform="translate(1319 442)"><rect x="8" y="7" width="23" height="23" fill="none" stroke="#d81800" stroke-width="2.500"/><path d="M14 11l0 15 4-3 4 7 3-2-4-7 5-1z"/></g>
<g transform="translate(1359 442)"><path d="M13 7h18v23H13L8 25V12z" fill="none" stroke="#d81800" stroke-width="2.500"/><path d="M15 11l0 15 4-3 4 7 3-2-4-7 5-1z"/></g>
<g transform="translate(1399 442)"><path d="M7 6v19h5M10 30h6V17h7V12h8" fill="none" stroke="#000"/><circle cx="11" cy="22" r="2.500" fill="#d80000"/><circle cx="10" cy="30" r="2.500" fill="#40d040"/><circle cx="28" cy="12" r="2.500" fill="#40d040"/><path d="M23 15l0 14 3-3 4 6 3-2-4-6 4-1z"/></g>
</g>

<!-- Thumbnail -->
<rect x="1278" y="485" width="162" height="241" fill="#2f6a50"/><rect x="1281" y="488" width="156" height="235" fill="#000"/>
<g fill="none" stroke="#fff" stroke-width="2.500">
<path d="M1295 497h125v91h10v113M1294 497v91h-8v127h119v-12M1298 497v64M1358 497v64"/>
<path d="M1297 519h123M1297 540h123" stroke-width="3.500"/>
<path d="M1297 561h123" stroke-width="2"/>
<path d="M1286 592h144" stroke-width="2.500"/>
<path d="M1286 627h144M1286 664h144M1286 701h144" stroke-width="3.500"/>
<path d="M1286 705h119" stroke-width="2"/>
<path d="M1358 592v108" stroke-width="4"/>
<path d="M1333 518h5M1333 539h5M1393 518h5M1393 539h5M1333 560h5M1393 560h5M1295 519h4M1295 540h4" stroke-width="4"/>
</g>
<use href="#x" x="1298" y="561" transform="translate(649 280.500) scale(.5)"/><use href="#x" x="1358" y="561" transform="translate(679 280.500) scale(.5)"/><use href="#x" x="1287" y="627" transform="translate(643.500 313.500) scale(.5)"/><use href="#x" x="1287" y="664" transform="translate(643.500 332) scale(.5)"/><use href="#x" x="1287" y="701" transform="translate(643.500 350.500) scale(.5)"/><use href="#x" x="1287" y="714" transform="translate(643.500 357) scale(.5)"/><use href="#x" x="1405" y="703" transform="translate(702.500 351.500) scale(.5)"/>

<!-- readout -->
<rect x="1277" y="726" width="163" height="44" fill="#52c8ac"/><rect x="1277" y="725" width="163" height="2" fill="#b0f0dc"/><rect x="1277" y="768" width="163" height="2" fill="#d0f4e8"/>
<text x="1281" y="745" class="m" font-size="14.500" textLength="116" xml:space="preserve">X = 0.840738"</text>
<text x="1281" y="760" class="m" font-size="14.500" textLength="125" xml:space="preserve">Y = 15.789950"</text>

<!-- Bottom bar -->
<rect x="0" y="770" width="1440" height="34" fill="#ffffd8"/>
<rect x="0" y="770" width="1440" height="1" fill="#000"/>
<rect x="0" y="803" width="1440" height="2" fill="#202020"/>
<rect x="3" y="773" width="29" height="29" fill="#ffffd8" stroke="#c8c8a8"/><rect x="7.500" y="777.500" width="19" height="19" fill="none" stroke="#000"/><rect x="9.500" y="779.500" width="15" height="15" fill="none" stroke="#000"/><path d="M11 781l11 11M11 781h5M11 781v5M22 792h-5M22 792v-5" stroke="#000" shape-rendering="auto" fill="none"/>
<rect x="34" y="773" width="30" height="29" fill="#ffffd8" stroke="#c8c8a8"/><rect x="39.500" y="777.500" width="20" height="19" fill="none" stroke="#000"/><path d="M42 794h15M43 793l8-12M47 786v8M50 791l4 0" stroke="#000" shape-rendering="auto" fill="none"/>
<rect x="66" y="771" width="28" height="33" fill="#52c8ac"/><rect x="69" y="774" width="22" height="26" fill="#ffffd8"/><rect x="72.500" y="779.500" width="15" height="15" fill="none" stroke="#000"/><path d="M80 780v14M73 787h14M73 787l7-7" stroke="#000" fill="none"/>
<text x="98" y="791" class="m" font-size="13" textLength="35" xml:space="preserve">X Y :</text>
<rect x="144.500" y="774" width="170" height="27" fill="#ffffd8" stroke="#b8b8a0" stroke-width="2"/>
<path d="M150 777h5M150 790h5M152.500 777v13" stroke="#404040" fill="none"/>
<rect x="316" y="771" width="31" height="33" fill="#52c8ac"/><rect x="320" y="775" width="23" height="25" fill="#ffffd8"/><rect x="323.500" y="778.500" width="16" height="18" fill="none" stroke="#000"/><path d="M331.500 781v9M331.500 792v2" stroke="#000" stroke-width="1.600"/>
<rect x="347" y="771" width="2" height="33" fill="#202020"/>
<text x="352" y="791" class="m" font-size="12" textLength="216" xml:space="preserve">&lt;M1&gt; - Select first area corner</text>
<rect x="1360" y="771" width="80" height="33" fill="#46b498"/><rect x="1360" y="771" width="2" height="33" fill="#202020"/>
<rect x="1367" y="773" width="69" height="28" fill="#52c8ac"/><path d="M1367 773h69l-3 3h-63v22l-3 3z" fill="#a0ecd4"/><path d="M1436 801h-69l3-3h63v-22l3-3z" fill="#2f8a76"/>
<text x="1373" y="792" class="m" font-size="14" textLength="37">Inch</text>
<rect x="1417" y="785" width="12" height="6" fill="#8fdcc0"/><path d="M1417 791h12v-6" fill="none" stroke="#2f7a66"/>

<!-- Status -->
<rect x="0" y="805" width="1440" height="32" fill="#202020"/>
<rect x="2" y="806" width="1436" height="28" fill="#b0ffff"/>
<path d="M2 806h1436l-3 2H6v24l-4 2z" fill="#e0ffff"/><path d="M1438 834H2l4-2h1429V808l3-2z" fill="#70a8a8"/>
<text x="336" y="824" class="m" font-size="12" textLength="769">rout,#252,Arc,XC=0.777675,YC=14.7173176,XS=0.7498,YS=14.7450927,XE=0.8054,YE=14.6893927,D=0.0787013,r10,POS,CW</text>
<rect x="0" y="836" width="1440" height="4" fill="#b8b8b8"/><rect x="0" y="839" width="1440" height="1" fill="#505050"/>
</svg>
</body></html>
